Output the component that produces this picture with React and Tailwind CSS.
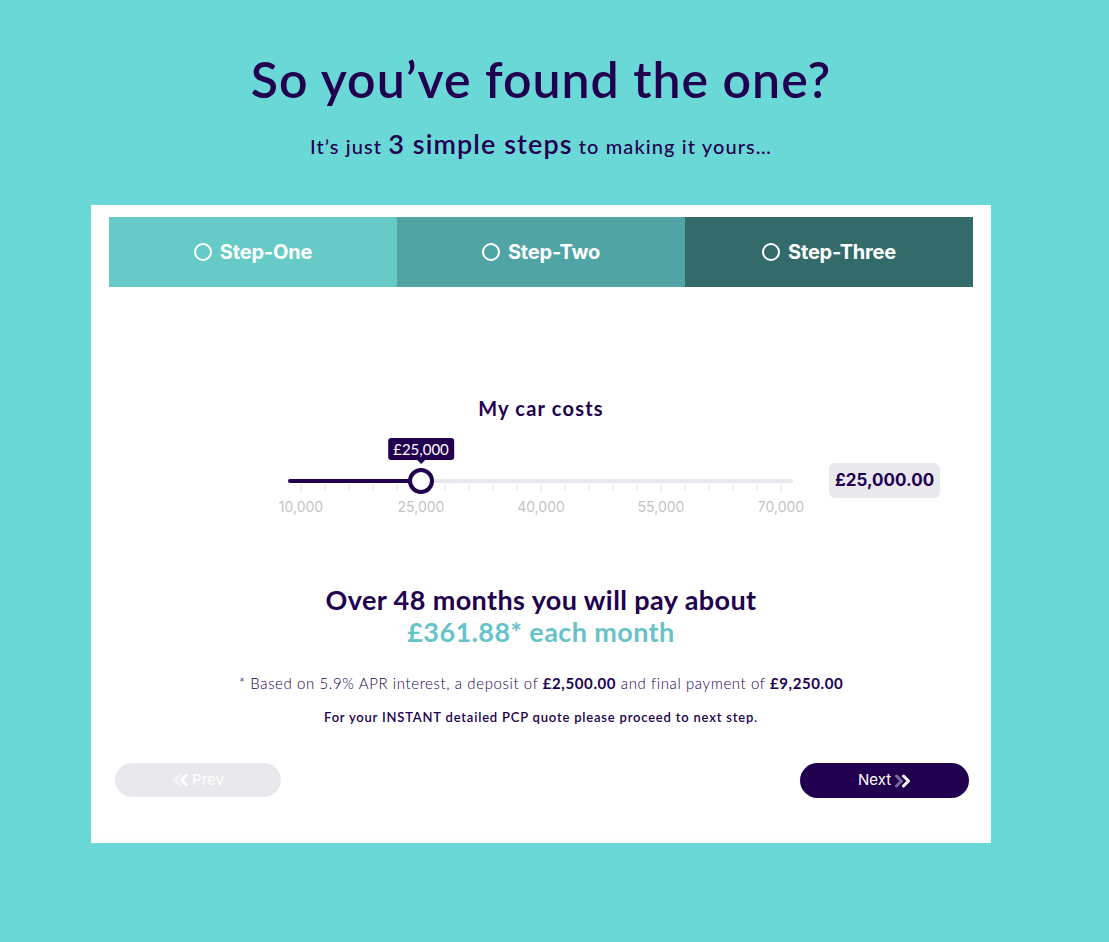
import React from 'react';

const min = 10000;
const max = 70000;
const value = 25000;

const pxPerUnit = 480 / (max - min);
const valueX = 13 + (value - min) * pxPerUnit;

const majorLabels = ['10,000', '25,000', '40,000', '55,000', '70,000'];
const tabs = [
    { label: 'Step-One', bg: 'bg-[#66cbc6]' },
    { label: 'Step-Two', bg: 'bg-[#51a4a4]' },
    { label: 'Step-Three', bg: 'bg-[#326b6a]' },
];

function Ticks() {
    const ticks = [];
    for (let i = 0; i <= 20; i++) {
        const x = 13 + i * 24;
        const major = i % 5 === 0;
        ticks.push(<line key={i} x1={x} x2={x} y1={0} y2={major ? 9 : 6} stroke="#dfe2e8" strokeWidth="1" />);
    }
    return (
        <svg width="505" height="10" className="block">
            {ticks}
        </svg>
    );
}

function Slider() {
    return (
        <div className="relative w-[505px] shrink-0 pt-[43px]">
            {/* tooltip */}
            <div
                className="absolute top-[2px] -translate-x-1/2 flex flex-col items-center"
                style={{ left: valueX }}
            >
                <div className="bg-[#21004f] text-white text-[15px] leading-[22px] px-[5px] rounded-[3px]">£25,000</div>
                <div className="w-0 h-0 border-x-[4px] border-x-transparent border-t-[4px] border-t-[#21004f]" />
            </div>
            {/* track */}
            <div className="relative h-[4px] rounded-full bg-[#e4e7ed]">
                <div className="absolute left-0 top-0 h-full rounded-full bg-[#21004f]" style={{ width: valueX }} />
                <div
                    className="absolute top-1/2 w-[26px] h-[26px] -translate-x-1/2 -translate-y-1/2 rounded-full bg-white border-[4px] border-[#21004f]"
                    style={{ left: valueX }}
                />
            </div>
            <div className="mt-[1px]">
                <Ticks />
            </div>
            <div className="flex ml-[-47px] mt-[3px]">
                {majorLabels.map((l) => (
                    <div key={l} className="w-[120px] shrink-0 text-center text-[14px] leading-[20px] text-[#c4c4c4] font-['Inter',sans-serif]">
                        {l}
                    </div>
                ))}
            </div>
        </div>
    );
}

function DoubleChevron({ dir = 'right', first, second }) {
    const flip = dir === 'left' ? 'scale(-1,1) translate(-16,0)' : undefined;
    return (
        <svg width="16" height="14" viewBox="0 0 16 14" className="inline-block">
            <g transform={flip}>
                <path d="M1.5 2 L6.5 7 L1.5 12" fill="none" stroke={first} strokeWidth="3" strokeLinecap="round" strokeLinejoin="round" />
                <path d="M8.5 2 L13.5 7 L8.5 12" fill="none" stroke={second} strokeWidth="3" strokeLinecap="round" strokeLinejoin="round" />
            </g>
        </svg>
    );
}

export default function App() {
    return (
        <div className="min-h-[942px] bg-[#6bd8d8] font-['Lato',sans-serif] text-[#21004f]">
            <div className="ml-[91px] w-[900px] pt-[48px]">
                <h1 className="text-center text-[50px] leading-[62px] font-semibold tracking-[1px]">So you’ve found the one?</h1>
                <p className="text-center mt-[17px] leading-[34px] text-[20px] font-medium tracking-[1.1px]">
                    It’s just <span className="text-[27px] font-semibold">3 simple steps</span> to making it yours…
                </p>

                <div className="mt-[42px] bg-white px-[18px] pt-[12px] pb-[45px] shadow-[inset_0_0_12px_rgba(0,0,0,0.03)]">
                    {/* tabs */}
                    <div className="grid grid-cols-3 h-[70px]">
                        {tabs.map((t) => (
                            <div key={t.label} className={`${t.bg} flex items-center justify-center gap-[8px] text-white`}>
                                <span className="w-[18px] h-[18px] rounded-full border-2 border-white" />
                                <span className="text-[20px] font-bold font-['Inter',sans-serif] tracking-[-0.2px]">{t.label}</span>
                            </div>
                        ))}
                    </div>

                    <h2 className="mt-[107px] text-center text-[20px] leading-[28px] font-bold tracking-[1.2px]">My car costs</h2>

                    <div className="flex items-start mt-[14px] ml-[179px]">
                        <Slider />
                        <div className="ml-[36px] mt-[27px] w-[111px] h-[35px] shrink-0 rounded-[6px] bg-[#e9e8ec] flex items-center justify-center text-[17px] font-bold font-['Inter',sans-serif]">
                            £25,000.00
                        </div>
                    </div>

                    <div className="mt-[67px] text-center text-[27px] leading-[32px] font-bold tracking-[0.4px]">
                        <p>Over 48 months you will pay about</p>
                        <p className="text-[#66c4c8]">£361.88* each month</p>
                    </div>

                    <p className="mt-[24px] text-center text-[15px] leading-[22px] font-light tracking-[0.6px]">
                        * Based on 5.9% APR interest, a deposit of <b className="font-bold">£2,500.00</b> and final payment of <b className="font-bold">£9,250.00</b>
                    </p>
                    <p className="mt-[13px] text-center text-[13px] leading-[20px] font-semibold tracking-[0.8px]">
                        For your INSTANT detailed PCP quote please proceed to next step.
                    </p>

                    <div className="mt-[36px] flex justify-between pl-[6px] pr-[4px]">
                        <button className="w-[166px] h-[34px] rounded-full bg-[#e9e8ec] text-white text-[15px] font-['Inter',sans-serif] flex items-center justify-center gap-[4px]">
                            <DoubleChevron dir="left" first="#ffffff" second="#f4f3f6" />
                            Prev
                        </button>
                        <button className="w-[169px] h-[35px] rounded-full bg-[#21004f] text-white text-[15px] font-['Inter',sans-serif] flex items-center justify-center gap-[4px]">
                            Next
                            <DoubleChevron first="#7b6a9c" second="#ffffff" />
                        </button>
                    </div>
                </div>
            </div>
        </div>
    );
}
